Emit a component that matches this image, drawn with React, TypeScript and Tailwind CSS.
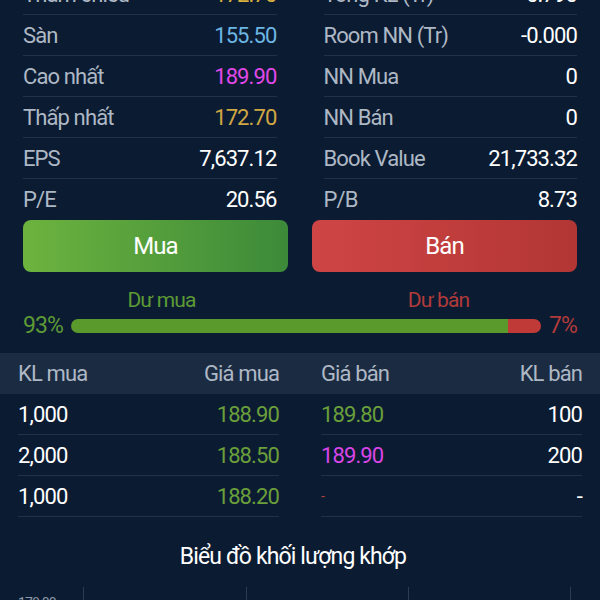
const leftRows = [
  { label: "Tham chiếu", value: "172.70", color: "text-[#d8b13e]" },
  { label: "Sàn", value: "155.50", color: "text-[#6cb6e4]" },
  { label: "Cao nhất", value: "189.90", color: "text-[#e048e8]" },
  { label: "Thấp nhất", value: "172.70", color: "text-[#d1a743]" },
  { label: "EPS", value: "7,637.12", color: "text-white" },
  { label: "P/E", value: "20.56", color: "text-white" },
];

const rightRows = [
  { label: "Tổng KL (Tr)", value: "0.790", color: "text-white" },
  { label: "Room NN (Tr)", value: "-0.000", color: "text-white" },
  { label: "NN Mua", value: "0", color: "text-white" },
  { label: "NN Bán", value: "0", color: "text-white" },
  { label: "Book Value", value: "21,733.32", color: "text-white" },
  { label: "P/B", value: "8.73", color: "text-white" },
];

const book = [
  { klMua: "1,000", giaMua: "188.90", giaBan: "189.80", banColor: "text-[#6a9f3a]", klBan: "100" },
  { klMua: "2,000", giaMua: "188.50", giaBan: "189.90", banColor: "text-[#d945e6]", klBan: "200" },
  { klMua: "1,000", giaMua: "188.20", giaBan: "-", banColor: "text-[14px] text-[#b0403a]", klBan: "-" },
];

function StatColumn({ rows }: { rows: typeof leftRows }) {
  return (
    <div className="flex flex-col">
      {rows.map((r, i) => (
        <div
          key={r.label}
          className={`flex h-[41px] items-center justify-between ${i < rows.length - 1 ? "border-b border-[#1e3249]" : ""}`}
        >
          <span className="text-[#aeb8c5]">{r.label}</span>
          <span className={r.color}>{r.value}</span>
        </div>
      ))}
    </div>
  );
}

export default function App() {
  return (
    <div
      className="h-[600px] w-[600px] overflow-hidden bg-[#0b1c32] text-[22px] tracking-[-0.04em]"
      style={{ fontFamily: "Roboto, 'Noto Sans', sans-serif" }}
    >
      {/* stats */}
      <div className="-mt-[26px] grid grid-cols-2 gap-x-[47px] px-[23px]">
        <StatColumn rows={leftRows} />
        <StatColumn rows={rightRows} />
      </div>

      {/* buttons */}
      <div className="grid grid-cols-2 gap-x-[24px] px-[23px]">
        <button className="h-[52px] rounded-lg bg-gradient-to-r from-[#6cb33e] to-[#3c8a39] text-[24px] text-white">
          Mua
        </button>
        <button className="h-[52px] rounded-lg bg-gradient-to-r from-[#cf4545] to-[#b23634] text-[24px] text-white">
          Bán
        </button>
      </div>

      {/* surplus */}
      <div className="mt-[13px] grid grid-cols-2 px-[23px] text-[21px] leading-[30px]">
        <div className="text-center text-[#5d9a35]">Dư mua</div>
        <div className="text-center text-[#b23a3a]">Dư bán</div>
      </div>
      <div className="flex items-center gap-[8px] px-[23px] text-[23px] leading-[22px]">
        <span className="text-[#5d9a35]">93%</span>
        <div className="flex h-[14px] flex-1 overflow-hidden rounded-full">
          <div className="h-full w-[93%] bg-[#5a992c]" />
          <div className="h-full flex-1 bg-[#c03a38]" />
        </div>
        <span className="text-[#b23a3a]">7%</span>
      </div>

      {/* order book */}
      <div className="mt-[16px] grid h-[41px] grid-cols-2 items-center gap-x-[42px] bg-[#1b2c42] px-[18px] text-[#aeb8c5]">
        <div className="flex justify-between">
          <span>KL mua</span>
          <span>Giá mua</span>
        </div>
        <div className="flex justify-between">
          <span>Giá bán</span>
          <span>KL bán</span>
        </div>
      </div>
      <div className="grid grid-cols-2 gap-x-[42px] px-[18px]">
        <div className="flex flex-col">
          {book.map((b, i) => (
            <div key={i} className="flex h-[41px] items-center justify-between border-b border-[#1e3249]">
              <span className="text-white">{b.klMua}</span>
              <span className="text-[#6a9f3a]">{b.giaMua}</span>
            </div>
          ))}
        </div>
        <div className="flex flex-col">
          {book.map((b, i) => (
            <div key={i} className="flex h-[41px] items-center justify-between border-b border-[#1e3249]">
              <span className={b.banColor}>{b.giaBan}</span>
              <span className="text-white">{b.klBan}</span>
            </div>
          ))}
        </div>
      </div>

      {/* chart title */}
      <div className="mt-[24px] pr-[14px] text-center text-[23px] leading-[32px] text-white">Biểu đồ khối lượng khớp</div>

      <div className="mt-[14px] flex">
        <div className="w-[83px] pl-[18px] pt-[6px] text-[14px] text-[#8e99a8]">178.00</div>
        <div className="grid h-[40px] flex-1 grid-cols-3 pr-[29px]">
          <div className="border-l border-[#2a3b52]" />
          <div className="border-l border-[#2a3b52]" />
          <div className="border-x border-[#2a3b52]" />
        </div>
      </div>
    </div>
  );
}
